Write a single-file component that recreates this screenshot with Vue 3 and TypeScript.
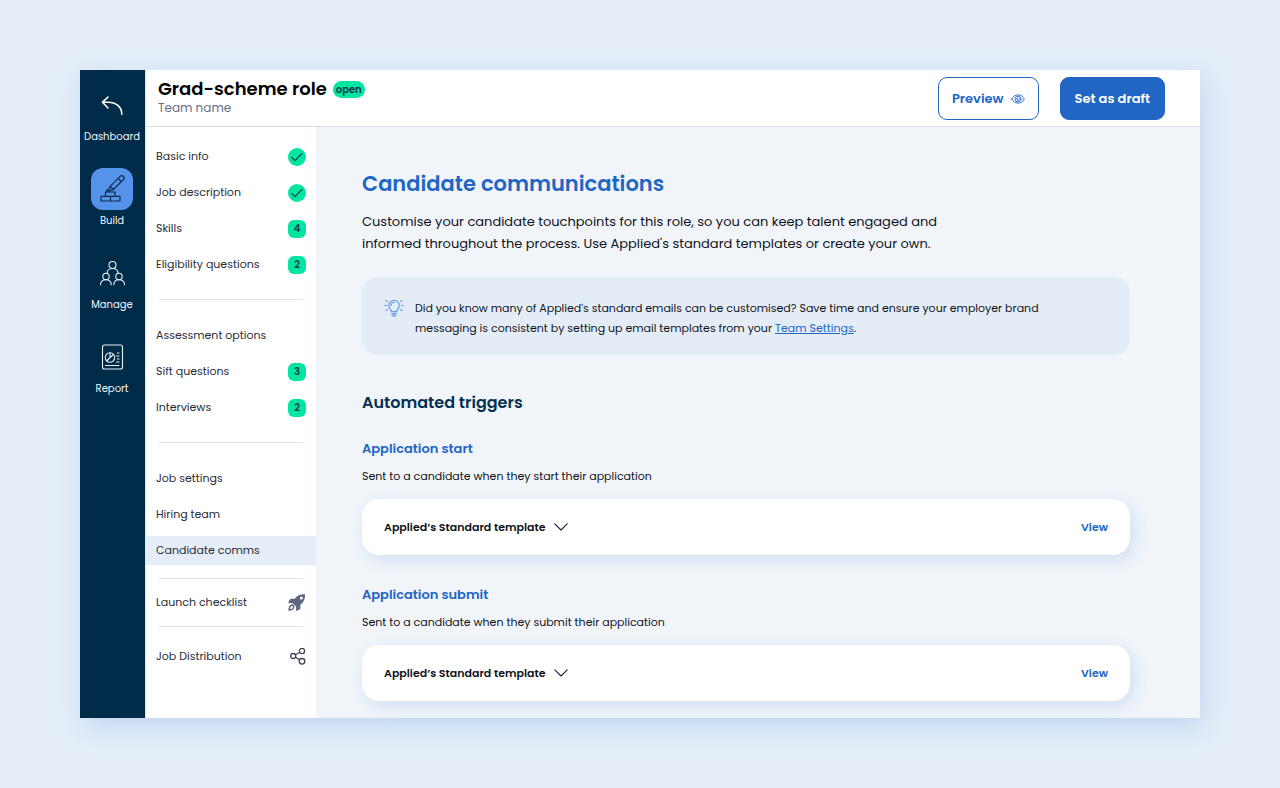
<script setup lang="ts">
import { ref } from 'vue'

interface Step {
  label: string
  done?: boolean
  count?: number
  current?: boolean
}

interface Trigger {
  id: string
  title: string
  description: string
}

const stepGroups: Step[][] = [
  [
    { label: 'Basic info', done: true },
    { label: 'Job description', done: true },
    { label: 'Skills', count: 4 },
    { label: 'Eligibility questions', count: 2 },
  ],
  [
    { label: 'Assessment options' },
    { label: 'Sift questions', count: 3 },
    { label: 'Interviews', count: 2 },
  ],
  [
    { label: 'Job settings' },
    { label: 'Hiring team' },
    { label: 'Candidate comms', current: true },
  ],
]

const triggers: Trigger[] = [
  {
    id: 'start',
    title: 'Application start',
    description: 'Sent to a candidate when they start their application',
  },
  {
    id: 'submit',
    title: 'Application submit',
    description: 'Sent to a candidate when they submit their application',
  },
]

const standardTemplate = 'Applied’s Standard template'
const chosen = ref<Record<string, string>>({
  start: standardTemplate,
  submit: standardTemplate,
})
</script>

<template>
  <div class="page">
    <div class="shell">
      <nav class="rail" aria-label="Main">
        <a href="#" class="rail-item">
          <span class="rail-icon">
            <svg width="42" height="42" viewBox="0 0 42 42" fill="none" stroke="#fff" stroke-width="1.6" stroke-linecap="round" stroke-linejoin="round">
              <path d="M17 13 11.500 18.200 17 24M11.500 18.200h5.500c8 0 13.800 4.500 13.800 12" />
            </svg>
          </span>
          Dashboard
        </a>
        <a href="#" class="rail-item" aria-current="page">
          <span class="rail-icon active">
            <svg width="42" height="42" viewBox="0 0 42 42" fill="none" stroke="#0b2c4d" stroke-width="1.2" stroke-linejoin="round" stroke-linecap="round">
              <path d="M10 28.300h19v4.700H10zM19.500 28.300V33M14.500 28.300v-4.300h9.500v4.300" />
              <path d="M15.800 24v-2.200h2.200M17.500 23.300l1.700-5L29.200 8.300c1-.9 2.300-.9 3.200 0s.9 2.200 0 3.200L22.400 21.500zM19.200 18.300l3.200 3.200M27 10.500l3.200 3.200" />
            </svg>
          </span>
          Build
        </a>
        <a href="#" class="rail-item">
          <span class="rail-icon">
            <svg width="42" height="42" viewBox="0 0 42 42" fill="none" stroke="#e9f1fa" stroke-width="1.1" stroke-linecap="round">
              <circle cx="21.500" cy="13" r="3.500" />
              <path d="M16 21.500c0-3 2-5 5.500-5s5.500 2 5.500 5" />
              <circle cx="15" cy="24.500" r="3.200" />
              <path d="M9.500 32.800c0-3.200 2-5.100 5.500-5.100s5.200 1.900 5.200 5.100" />
              <circle cx="28" cy="24.500" r="3.200" />
              <path d="M22.800 32.800c0-3.200 1.700-5.100 5.200-5.100s5.500 1.900 5.500 5.100" />
            </svg>
          </span>
          Manage
        </a>
        <a href="#" class="rail-item">
          <span class="rail-icon">
            <svg width="42" height="42" viewBox="0 0 42 42" fill="none" stroke="#e9f1fa" stroke-width="1.1" stroke-linecap="round">
              <rect x="11.500" y="9" width="20" height="24" rx="2" />
              <circle cx="19" cy="21.500" r="4.700" />
              <path d="M19 16.800v4.700l-3.300 3.500M19 21.500l3.500-3M26.500 17H28M25.500 20H28M26.500 23H28M25.500 26H28M14.500 29.500H28" />
            </svg>
          </span>
          Report
        </a>
      </nav>

      <div class="workspace">
        <header class="topbar">
          <div class="role">
            <div class="role-line">
              <strong class="role-name">Grad-scheme role</strong>
              <span class="status">open</span>
            </div>
            <span class="team">Team name</span>
          </div>
          <div class="actions">
            <button type="button" class="btn outline">
              Preview
              <svg width="14" height="10" viewBox="0 0 14 10" fill="none" stroke="currentColor" stroke-width=".9" stroke-linecap="round">
                <path d="M.7 5C2 2.400 4.200.900 7 .900S12 2.400 13.300 5C12 7.600 9.800 9.100 7 9.100S2 7.600.700 5z" />
                <circle cx="7" cy="5" r="2.900" />
                <path d="M7 3.700a1.300 1.300 0 1 0 1.300 1.300" />
              </svg>
            </button>
            <button type="button" class="btn solid">Set as draft</button>
          </div>
        </header>

        <div class="columns">
          <nav class="steps" aria-label="Role setup">
            <template v-for="(group, g) in stepGroups" :key="g">
              <ul>
                <li v-for="step in group" :key="step.label">
                  <a href="#" class="step" :class="{ current: step.current }" :aria-current="step.current ? 'step' : undefined">
                    {{ step.label }}
                    <svg v-if="step.done" width="18" height="18" viewBox="0 0 18 18" fill="none" role="img" aria-label="Complete">
                      <circle cx="9" cy="9" r="9" fill="#00e5a0" />
                      <path d="M3.800 9.500 7 12.700 14 5.300" stroke="#0d3b4a" stroke-width="1.100" stroke-linecap="round" stroke-linejoin="round" />
                    </svg>
                    <span v-else-if="step.count" class="count">{{ step.count }}</span>
                  </a>
                </li>
              </ul>
              <hr v-if="g < stepGroups.length - 1">
            </template>
            <hr class="near">
            <a href="#" class="step">
              Launch checklist
              <svg width="18" height="18" viewBox="0 0 18 18" fill="#5d6680" fill-rule="evenodd">
                <path d="M17 .3c.3 3.600-.6 6.400-3 8.900l-1.700 1.500.1 3.600c0 .4-.2.700-.5.900l-3 1.600c-.4.200-.8 0-.8-.5v-3.900L4.300 9H.900c-.5 0-.7-.4-.5-.8l1.800-3c.2-.3.500-.4.900-.4h3.600L8.300 3.100C10.600.8 13.400 0 17 .3zM13.400 2.600a1.500 1.500 0 1 0 0 3 1.500 1.500 0 0 0 0-3z" />
                <path d="M3.200 10.400c1.700-.7 3.800 1.200 3.200 3.200-.6 2.300-2.900 3.200-6 3.200 0-3.200.7-5.600 2.800-6.400zm.5 1.600c-.9.300-1.500 1.500-1.600 3 1.500-.1 2.600-.6 2.900-1.600.2-.8-.6-1.600-1.300-1.400z" />
              </svg>
            </a>
            <hr class="close">
            <a href="#" class="step">
              Job Distribution
              <svg width="18" height="18" viewBox="0 0 18 18" fill="none" stroke="#3d4454" stroke-width="1.300">
                <circle cx="5.200" cy="8" r="2.500" />
                <circle cx="14" cy="3" r="2.600" />
                <circle cx="14" cy="13.300" r="2.800" />
                <path d="m7.400 6.700 4.200-2.400M7.400 9.300l4.200 2.500" />
              </svg>
            </a>
          </nav>

          <main class="content">
            <h1>Candidate communications</h1>
            <p class="intro">
              Customise your candidate touchpoints for this role, so you can keep talent engaged and<br>
              informed throughout the process. Use Applied's standard templates or create your own.
            </p>

            <aside class="tip">
              <svg width="20" height="20" viewBox="0 0 20 20" fill="none" stroke="#619af0" stroke-width="1.200" stroke-linecap="round">
                <path d="M7.500 13.500c0-1.500-2.700-2.700-2.700-6A5.200 5.200 0 0 1 10 2.300a5.200 5.200 0 0 1 5.200 5.200c0 3.300-2.700 4.500-2.700 6zM7.500 15.300h5M8 17h4M9 18h2M7 7.500a3 3 0 0 1 3-3" />
                <path d="M.800 7.500h1.700M17.500 7.500h1.700M1.800 2.500l1.500.800M18.200 2.500l-1.500.800M1.800 12.500l1.500-.8M18.200 12.500l-1.500-.8" />
              </svg>
              <p>
                Did you know many of Applied's standard emails can be customised? Save time and ensure your employer brand<br>
                messaging is consistent by setting up email templates from your <a href="#">Team Settings</a>.
              </p>
            </aside>

            <h2>Automated triggers</h2>
            <section v-for="trigger in triggers" :key="trigger.id" class="trigger">
              <h3>{{ trigger.title }}</h3>
              <label class="about" :for="`template-${trigger.id}`">{{ trigger.description }}</label>
              <div class="card">
                <div class="picker">
                  <select :id="`template-${trigger.id}`" v-model="chosen[trigger.id]">
                    <option>{{ standardTemplate }}</option>
                  </select>
                  <svg width="14" height="8" viewBox="0 0 14 8" fill="none" stroke="#1b2030" stroke-width="1.100" stroke-linecap="round" stroke-linejoin="round" aria-hidden="true">
                    <path d="m.800.800 6.200 6.200L13.200.800" />
                  </svg>
                </div>
                <a href="#" class="view">View</a>
              </div>
            </section>
          </main>
        </div>
      </div>
    </div>
  </div>
</template>

<style>
body {
  margin: 0;
  background: #e5eef8;
}
</style>

<style scoped>
.page {
  box-sizing: border-box;
  min-height: 100vh;
  padding: 70px 80px;
  display: flex;
  font-family: Poppins, Inter, "Liberation Sans", sans-serif;
  font-size: 11px;
  color: #10131a;
}

.page * {
  box-sizing: border-box;
}

.shell {
  flex: 1;
  display: flex;
  min-width: 0;
  background: #fff;
  box-shadow: 4px 8px 24px rgba(140, 178, 232, 0.4);
}

.rail {
  flex: none;
  width: 65px;
  padding: 14px 1px 0 0;
  display: flex;
  flex-direction: column;
  gap: 23px;
  background: #002b49;
}

.rail-item {
  display: flex;
  flex-direction: column;
  align-items: center;
  gap: 3px;
  font-size: 10px;
  line-height: 16px;
  color: #f2f6fb;
  text-decoration: none;
}

.rail-icon {
  width: 42px;
  height: 42px;
  border-radius: 12px;
}

.rail-icon.active {
  background: #5593ea;
}

.rail-icon svg {
  display: block;
}

.workspace {
  flex: 1;
  min-width: 0;
  display: flex;
  flex-direction: column;
  border-left: 1px solid #dfe4ee;
}

.topbar {
  display: flex;
  justify-content: space-between;
  padding: 7px 35px 6px 12px;
  border-bottom: 1px solid #dcdfea;
}

.role-line {
  display: flex;
  align-items: center;
  gap: 6px;
}

.role-name {
  font-size: 18px;
  line-height: 24px;
  font-weight: 600;
  color: #000;
}

.status {
  padding: 0 3px;
  border-radius: 9px;
  background: #00e5a0;
  font-size: 10px;
  line-height: 17px;
  font-weight: 600;
  color: #0d3b4a;
}

.team {
  display: block;
  font-size: 12px;
  line-height: 13px;
  color: #666e87;
}

.actions {
  display: flex;
  gap: 21px;
}

.btn {
  display: flex;
  align-items: center;
  gap: 7px;
  height: 43px;
  padding: 0 13px;
  border: 1px solid #2166c5;
  border-radius: 9px;
  font: inherit;
  font-size: 13px;
  font-weight: 600;
}

.outline {
  background: #fff;
  color: #2166c5;
}

.solid {
  padding: 0 14px;
  background: #2166c5;
  color: #fff;
}

.columns {
  flex: 1;
  display: flex;
}

.steps {
  flex: none;
  width: 170px;
  padding-top: 15px;
}

.steps ul {
  display: flex;
  flex-direction: column;
  gap: 7px;
  margin: 0;
  padding: 0;
  list-style: none;
}

.step {
  display: flex;
  justify-content: space-between;
  align-items: center;
  height: 29px;
  padding: 0 10px;
  color: #272c3a;
  text-decoration: none;
}

.current {
  background: #e4edf8;
}

.count {
  width: 18px;
  border-radius: 6px;
  background: #00e5a0;
  font-size: 10px;
  line-height: 18px;
  font-weight: 600;
  text-align: center;
  color: #123c4a;
}

.steps hr {
  height: 1px;
  margin: 20px 13px 21px;
  border: 0;
  background: #dfe1e6;
}

.steps hr.near {
  margin: 13px 13px 9px;
}

.steps hr.close {
  margin: 9px 13px 15px;
}

.content {
  flex: 1;
  min-width: 0;
  padding: 43px 70px 17px 46px;
  background: #f1f5fa;
}

h1,
h2,
h3,
p {
  margin: 0;
}

h1 {
  font-size: 21px;
  line-height: 28px;
  font-weight: 600;
  color: #2166c5;
}

.intro {
  margin-top: 13px;
  font-size: 13px;
  line-height: 22px;
}

.tip {
  display: flex;
  gap: 11px;
  margin-top: 22px;
  padding: 21px 22px 17px;
  border-radius: 16px;
  background: #e4edf7;
  line-height: 20px;
}

.tip svg {
  flex: none;
}

.tip a {
  color: #2166c5;
}

h2 {
  margin-top: 36px;
  font-size: 16px;
  line-height: 24px;
  font-weight: 600;
  color: #05304f;
}

.trigger {
  margin-top: 23px;
}

.trigger + .trigger {
  margin-top: 29px;
}

h3 {
  font-size: 13px;
  line-height: 22px;
  font-weight: 600;
  color: #2166c5;
}

.about {
  display: block;
  margin-top: 7px;
  line-height: 18px;
}

.card {
  display: flex;
  justify-content: space-between;
  align-items: center;
  height: 56px;
  margin-top: 14px;
  padding: 0 22px;
  border-radius: 17px;
  background: #fff;
  box-shadow: 4px 5px 16px rgba(140, 178, 232, 0.32);
}

.picker {
  display: grid;
  align-items: center;
  justify-items: end;
}

.picker > * {
  grid-area: 1 / 1;
}

.picker svg {
  pointer-events: none;
}

.picker select {
  appearance: none;
  margin: 0;
  padding: 0 22px 0 0;
  border: 0;
  background: none;
  font: inherit;
  font-weight: 600;
  line-height: 20px;
  color: #10131a;
}

.view {
  font-weight: 600;
  color: #2166c5;
  text-decoration: none;
}
</style>
